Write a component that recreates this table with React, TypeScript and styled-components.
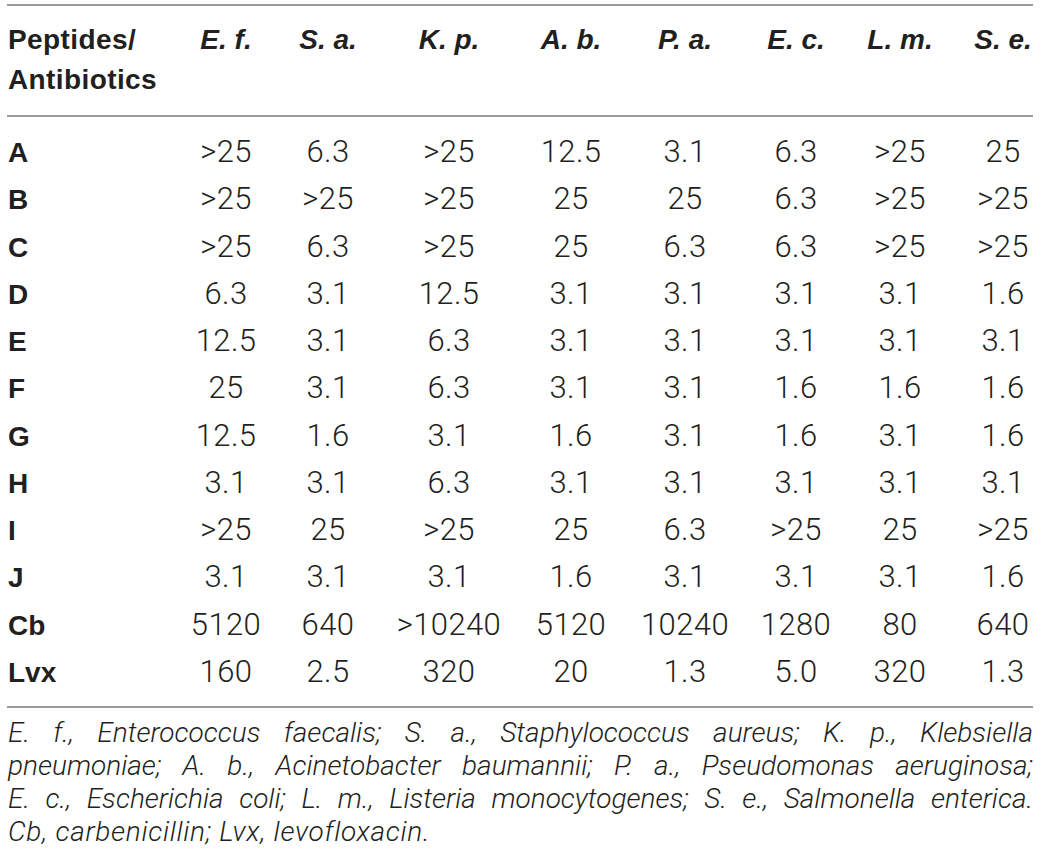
import React from "react";
import styled, { createGlobalStyle } from "styled-components";

const GlobalStyle = createGlobalStyle`
  html, body {
    margin: 0;
    padding: 0;
    background: #ffffff;
  }
  body {
    font-family: "Liberation Sans", Arial, sans-serif;
    color: #231f20;
  }
`;

const COLS = "168px 102px 102px 140px 104px 124px 98px 110px 78px";

const Page = styled.div`
  padding: 4px 0 0 7px;
  width: 1026px;
`;

const Table = styled.div`
  border-top: 2px solid #9a9a9a;
  border-bottom: 2px solid #9a9a9a;
`;

const HeaderRow = styled.div`
  display: grid;
  grid-template-columns: ${COLS};
  align-items: start;
  padding: 14px 0 15px;
  border-bottom: 2px solid #9a9a9a;
`;

const HeadLabel = styled.div`
  font-family: "Liberation Sans", Arial, sans-serif;
  font-weight: 700;
  font-size: 28px;
  line-height: 40px;
  letter-spacing: 0.4px;
  padding-left: 1px;
`;

const HeadSpecies = styled.div`
  font-family: "Liberation Sans", Arial, sans-serif;
  font-weight: 700;
  font-style: italic;
  font-size: 28px;
  line-height: 40px;
  text-align: center;
  white-space: nowrap;
  &:last-child {
    padding-left: 18px;
  }
`;

const Body = styled.div`
  padding: 11px 0 11px;
`;

const Row = styled.div`
  display: grid;
  grid-template-columns: ${COLS};
  height: 47.27px;
  align-items: baseline;
`;

const RowLabel = styled.div`
  font-family: "Liberation Sans", Arial, sans-serif;
  font-weight: 700;
  font-size: 28px;
  line-height: 47.27px;
  padding-left: 1px;
`;

const Value = styled.div`
  font-family: Roboto, "Liberation Sans", sans-serif;
  font-weight: 300;
  font-size: 31px;
  line-height: 47.27px;
  letter-spacing: 0.4px;
  text-align: center;
  white-space: nowrap;
  &:last-child {
    padding-left: 18px;
  }
`;

const Footnote = styled.div`
  padding-top: 8px;
  font-family: Roboto, "Liberation Sans", sans-serif;
  font-weight: 300;
  font-style: italic;
  font-size: 28px;
  line-height: 33px;
  padding-left: 1px;
`;

const NoteLine = styled.div<{ $justify?: boolean }>`
  text-align: ${(p) => (p.$justify ? "justify" : "left")};
  text-align-last: ${(p) => (p.$justify ? "justify" : "left")};
  letter-spacing: ${(p) => (p.$justify ? "0" : "0.7px")};
`;

const species = ["E. f.", "S. a.", "K. p.", "A. b.", "P. a.", "E. c.", "L. m.", "S. e."];

const rows: [string, string[]][] = [
  ["A", [">25", "6.3", ">25", "12.5", "3.1", "6.3", ">25", "25"]],
  ["B", [">25", ">25", ">25", "25", "25", "6.3", ">25", ">25"]],
  ["C", [">25", "6.3", ">25", "25", "6.3", "6.3", ">25", ">25"]],
  ["D", ["6.3", "3.1", "12.5", "3.1", "3.1", "3.1", "3.1", "1.6"]],
  ["E", ["12.5", "3.1", "6.3", "3.1", "3.1", "3.1", "3.1", "3.1"]],
  ["F", ["25", "3.1", "6.3", "3.1", "3.1", "1.6", "1.6", "1.6"]],
  ["G", ["12.5", "1.6", "3.1", "1.6", "3.1", "1.6", "3.1", "1.6"]],
  ["H", ["3.1", "3.1", "6.3", "3.1", "3.1", "3.1", "3.1", "3.1"]],
  ["I", [">25", "25", ">25", "25", "6.3", ">25", "25", ">25"]],
  ["J", ["3.1", "3.1", "3.1", "1.6", "3.1", "3.1", "3.1", "1.6"]],
  ["Cb", ["5120", "640", ">10240", "5120", "10240", "1280", "80", "640"]],
  ["Lvx", ["160", "2.5", "320", "20", "1.3", "5.0", "320", "1.3"]],
];

const notes = [
  "E. f., Enterococcus faecalis; S. a., Staphylococcus aureus; K. p., Klebsiella",
  "pneumoniae; A. b., Acinetobacter baumannii; P. a., Pseudomonas aeruginosa;",
  "E. c., Escherichia coli; L. m., Listeria monocytogenes; S. e., Salmonella enterica.",
  "Cb, carbenicillin; Lvx, levofloxacin.",
];

export default function App() {
  return (
    <>
      <GlobalStyle />
      <Page>
        <Table>
          <HeaderRow>
            <HeadLabel>
              Peptides/
              <br />
              Antibiotics
            </HeadLabel>
            {species.map((s) => (
              <HeadSpecies key={s}>{s}</HeadSpecies>
            ))}
          </HeaderRow>
          <Body>
            {rows.map(([label, vals]) => (
              <Row key={label}>
                <RowLabel>{label}</RowLabel>
                {vals.map((v, i) => (
                  <Value key={i}>{v}</Value>
                ))}
              </Row>
            ))}
          </Body>
        </Table>
        <Footnote>
          {notes.map((n, i) => (
            <NoteLine key={i} $justify={i < notes.length - 1}>
              {n}
            </NoteLine>
          ))}
        </Footnote>
      </Page>
    </>
  );
}
